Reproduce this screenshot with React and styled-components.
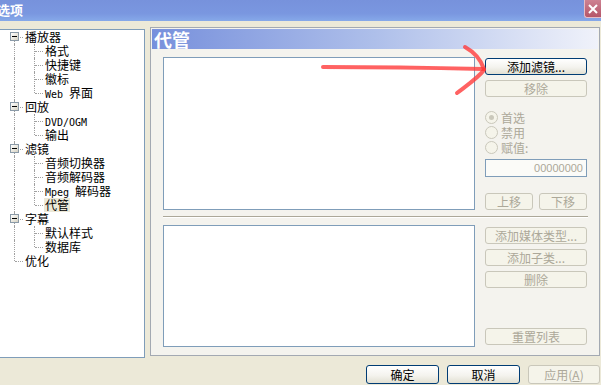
import React from "react";
import styled, { createGlobalStyle } from "styled-components";

const CJK = `"Noto Sans CJK SC", "Noto Sans", sans-serif`;

const GlobalStyle = createGlobalStyle`
  html, body {
    margin: 0;
    padding: 0;
    overflow: hidden;
    background: #ece9d8;
  }
  * {
    box-sizing: border-box;
  }
`;

const Window = styled.div`
  position: relative;
  width: 601px;
  height: 385px;
  overflow: hidden;
  display: flex;
  flex-direction: column;
  background: #ece9d8;
  font-family: ${CJK};
  font-size: 12px;
  color: #000;
`;

const TitleBar = styled.div`
  flex: none;
  width: 601px;
  height: 21px;
  display: flex;
  justify-content: space-between;
  align-items: flex-start;
  background: linear-gradient(#7792dc, #7a97e0 65%, #86a9e9);
`;

const TitleText = styled.span`
  margin: 2px 0 0 -3px;
  color: #fff;
  font-weight: 700;
  font-size: 13px;
  line-height: 16px;
`;

const CloseButton = styled.div`
  flex: none;
  width: 17px;
  height: 18px;
  border-left: 1px solid #e6bcc5;
  border-bottom: 1px solid #e6bcc5;
  border-radius: 0 0 0 3px;
  background-color: #c06478;
  background-image: linear-gradient(#cd8292, #b55669);
  display: flex;
  align-items: center;
  padding-left: 2px;
`;

const Main = styled.div`
  display: flex;
  align-items: flex-start;
  gap: 5px;
  padding-top: 6px;
  margin-left: -1px;
`;

const TreePanel = styled.div`
  flex: none;
  width: 146px;
  height: 329px;
  margin-top: 2px;
  padding-left: 4px;
  background: #fff;
  border: 1px solid #7f9db9;
`;

const Row = styled.div`
  display: flex;
  align-items: center;
  height: 14px;
  line-height: 14px;
  white-space: nowrap;
`;

const Cell = styled.span`
  position: relative;
  flex: none;
  width: 20px;
  height: 14px;
  &::before {
    content: "";
    position: absolute;
    left: 10px;
    top: ${(p) => (p.$up ? "0" : "7px")};
    bottom: ${(p) => (p.$down ? "0" : "7px")};
    border-left: 1px dotted #a0a0a0;
  }
  &::after {
    content: "";
    display: ${(p) => (p.$branch ? "block" : "none")};
    position: absolute;
    left: 11px;
    right: 1px;
    top: 7px;
    border-top: 1px dotted #a0a0a0;
  }
`;

const Expander = styled.span`
  position: absolute;
  z-index: 1;
  left: 6px;
  top: 2px;
  width: 9px;
  height: 9px;
  border: 1px solid #8a9aa8;
  background: linear-gradient(135deg, #ffffff, #d6d2c2);
  &::after {
    content: "";
    position: absolute;
    left: 1px;
    top: 3px;
    width: 5px;
    height: 1px;
    background: #000;
  }
`;

const Label = styled.span`
  height: 14px;
  padding: 0 1px;
  background: ${(p) => (p.$selected ? "#ece9d8" : "transparent")};
`;

const Latin = styled.span`
  font-family: "DejaVu Sans Mono", "Liberation Mono", monospace;
  font-size: 10px;
  white-space: pre;
`;

const Frame = styled.div`
  flex: none;
  width: 450px;
  height: 329px;
  padding: 1px;
  display: flex;
  flex-direction: column;
  background: #f4f3ee;
  border: 1px solid #a3a9b2;
`;

const Header = styled.div`
  flex: none;
  height: 20px;
  padding-left: 2px;
  color: #fff;
  font-size: 18px;
  font-weight: 700;
  line-height: 20px;
  background: linear-gradient(to right, #7790dc, #aebfea 50%, #f0f2fa);
`;

const Body = styled.div`
  flex: 1;
  display: flex;
  flex-direction: column;
  padding: 8px 10px 7px 11px;
`;

const Section = styled.div`
  display: grid;
  grid-template-columns: 312px 102px;
  column-gap: 10px;
  height: ${(p) => p.$h}px;
`;

const ListBox = styled.div`
  background: #fff;
  border: 1px solid #7f9db9;
`;

const Column = styled.div`
  display: flex;
  flex-direction: column;
`;

const Separator = styled.div`
  height: 2px;
  margin: 8px 0 7px;
  border-top: 1px solid #aca899;
  border-bottom: 1px solid #fff;
`;

const Button = styled.button`
  flex: none;
  width: ${(p) => (p.$w ? `${p.$w}px` : "100%")};
  height: ${(p) => p.$h || 17}px;
  margin-top: ${(p) => (p.$pushed ? "auto" : `${p.$mt || 0}px`)};
  margin-bottom: ${(p) => (p.$pushed ? "2px" : "0")};
  padding: 0;
  font-family: ${CJK};
  font-size: 12px;
  line-height: 1;
  border-radius: 3px;
  border: 1px solid ${(p) => (p.disabled ? "#c9c7ba" : "#003c74")};
  background: ${(p) =>
    p.disabled ? "#f5f4ea" : "linear-gradient(#ffffff, #f4f3ee 55%, #e2e0d3)"};
  color: ${(p) => (p.disabled ? "#aca899" : "#000")};
`;

const RadioGroup = styled.div`
  display: flex;
  flex-direction: column;
  margin-top: 13px;
`;

const RadioRow = styled.div`
  display: flex;
  align-items: center;
  gap: 3px;
  height: 15px;
  color: #aca899;
`;

const RadioDot = styled.span`
  flex: none;
  width: 13px;
  height: 13px;
  border-radius: 50%;
  border: 1px solid #cac8bb;
  background: #f5f4ea;
  display: flex;
  align-items: center;
  justify-content: center;
  &::after {
    content: "";
    display: ${(p) => (p.$checked ? "block" : "none")};
    width: 5px;
    height: 5px;
    border-radius: 50%;
    background: #cac8bb;
  }
`;

const ValueBox = styled.div`
  height: 18px;
  margin-top: 4px;
  padding-right: 3px;
  text-align: right;
  font-family: "Liberation Sans", sans-serif;
  font-size: 11px;
  line-height: 16px;
  color: #aca899;
  background: #fbfbf8;
  border: 1px solid #7f9db9;
`;

const Pair = styled.div`
  display: flex;
  justify-content: space-between;
  margin-top: 16px;
`;

const Footer = styled.div`
  display: flex;
  justify-content: flex-end;
  gap: 8px;
  margin-top: 7px;
  padding-right: 1px;
`;

const Overlay = styled.svg`
  position: absolute;
  left: 0;
  top: 0;
  pointer-events: none;
`;

const tree = [
  { label: "播放器", children: ["格式", "快捷键", "徽标", "Web 界面"] },
  { label: "回放", children: ["DVD/OGM", "输出"] },
  { label: "滤镜", children: ["音频切换器", "音频解码器", "Mpeg 解码器", "代管"] },
  { label: "字幕", children: ["默认样式", "数据库"] },
  { label: "优化", children: [] },
];

const renderText = (text) =>
  text
    .split(/([\x20-\x7e]+)/)
    .filter(Boolean)
    .map((part, i) =>
      /^[\x20-\x7e]+$/.test(part) ? <Latin key={i}>{part}</Latin> : part
    );

const Tree = () => (
  <TreePanel>
    {tree.map((node, i) => {
      const last = i === tree.length - 1;
      return (
        <React.Fragment key={node.label}>
          <Row>
            <Cell $up={i > 0} $down={!last} $branch>
              {node.children.length > 0 && <Expander />}
            </Cell>
            <Label>{renderText(node.label)}</Label>
          </Row>
          {node.children.map((child, j) => (
            <Row key={child}>
              <Cell $up $down={!last} />
              <Cell $up $down={j < node.children.length - 1} $branch />
              <Label $selected={child === "代管"}>{renderText(child)}</Label>
            </Row>
          ))}
        </React.Fragment>
      );
    })}
  </TreePanel>
);

const Arrow = () => (
  <Overlay width="601" height="385" viewBox="0 0 601 385">
    <defs>
      <filter id="soft" x="-10%" y="-10%" width="120%" height="120%">
        <feGaussianBlur stdDeviation="0.6" />
      </filter>
    </defs>
    <g
      fill="none"
      stroke="#ff3b3b"
      strokeOpacity="0.8"
      strokeWidth="4"
      strokeLinecap="round"
      filter="url(#soft)"
    >
      <path d="M323 67 C 380 67, 440 68, 483 69" />
      <path d="M465 47 C 474 52, 481 60, 484 69" />
      <path d="M484 70 C 478 78, 466 86, 457 93" />
    </g>
  </Overlay>
);

const App = () => (
  <Window>
    <GlobalStyle />
    <TitleBar>
      <TitleText>选项</TitleText>
      <CloseButton>
        <svg width="12" height="12" viewBox="0 0 12 12">
          <path d="M2 2 L10 10 M10 2 L2 10" stroke="#ffffff" strokeWidth="2" />
        </svg>
      </CloseButton>
    </TitleBar>
    <Main>
      <Tree />
      <Frame>
        <Header>代管</Header>
        <Body>
          <Section $h={151}>
            <ListBox />
            <Column>
              <Button $mt={1}>添加滤镜...</Button>
              <Button $mt={5} disabled>
                移除
              </Button>
              <RadioGroup>
                <RadioRow>
                  <RadioDot $checked />
                  首选
                </RadioRow>
                <RadioRow>
                  <RadioDot />
                  禁用
                </RadioRow>
                <RadioRow>
                  <RadioDot />
                  赋值:
                </RadioRow>
              </RadioGroup>
              <ValueBox>00000000</ValueBox>
              <Pair>
                <Button $w={48} disabled>
                  上移
                </Button>
                <Button $w={48} disabled>
                  下移
                </Button>
              </Pair>
            </Column>
          </Section>
          <Separator />
          <Section $h={122}>
            <ListBox />
            <Column>
              <Button $mt={2} disabled>
                添加媒体类型...
              </Button>
              <Button $mt={5} disabled>
                添加子类...
              </Button>
              <Button $mt={5} disabled>
                删除
              </Button>
              <Button $pushed disabled>
                重置列表
              </Button>
            </Column>
          </Section>
        </Body>
      </Frame>
    </Main>
    <Footer>
      <Button $w={73} $h={19}>
        确定
      </Button>
      <Button $w={73} $h={19}>
        取消
      </Button>
      <Button $w={72} $h={19} disabled>
        应用(<u>A</u>)
      </Button>
    </Footer>
    <Arrow />
  </Window>
);

export default App;
